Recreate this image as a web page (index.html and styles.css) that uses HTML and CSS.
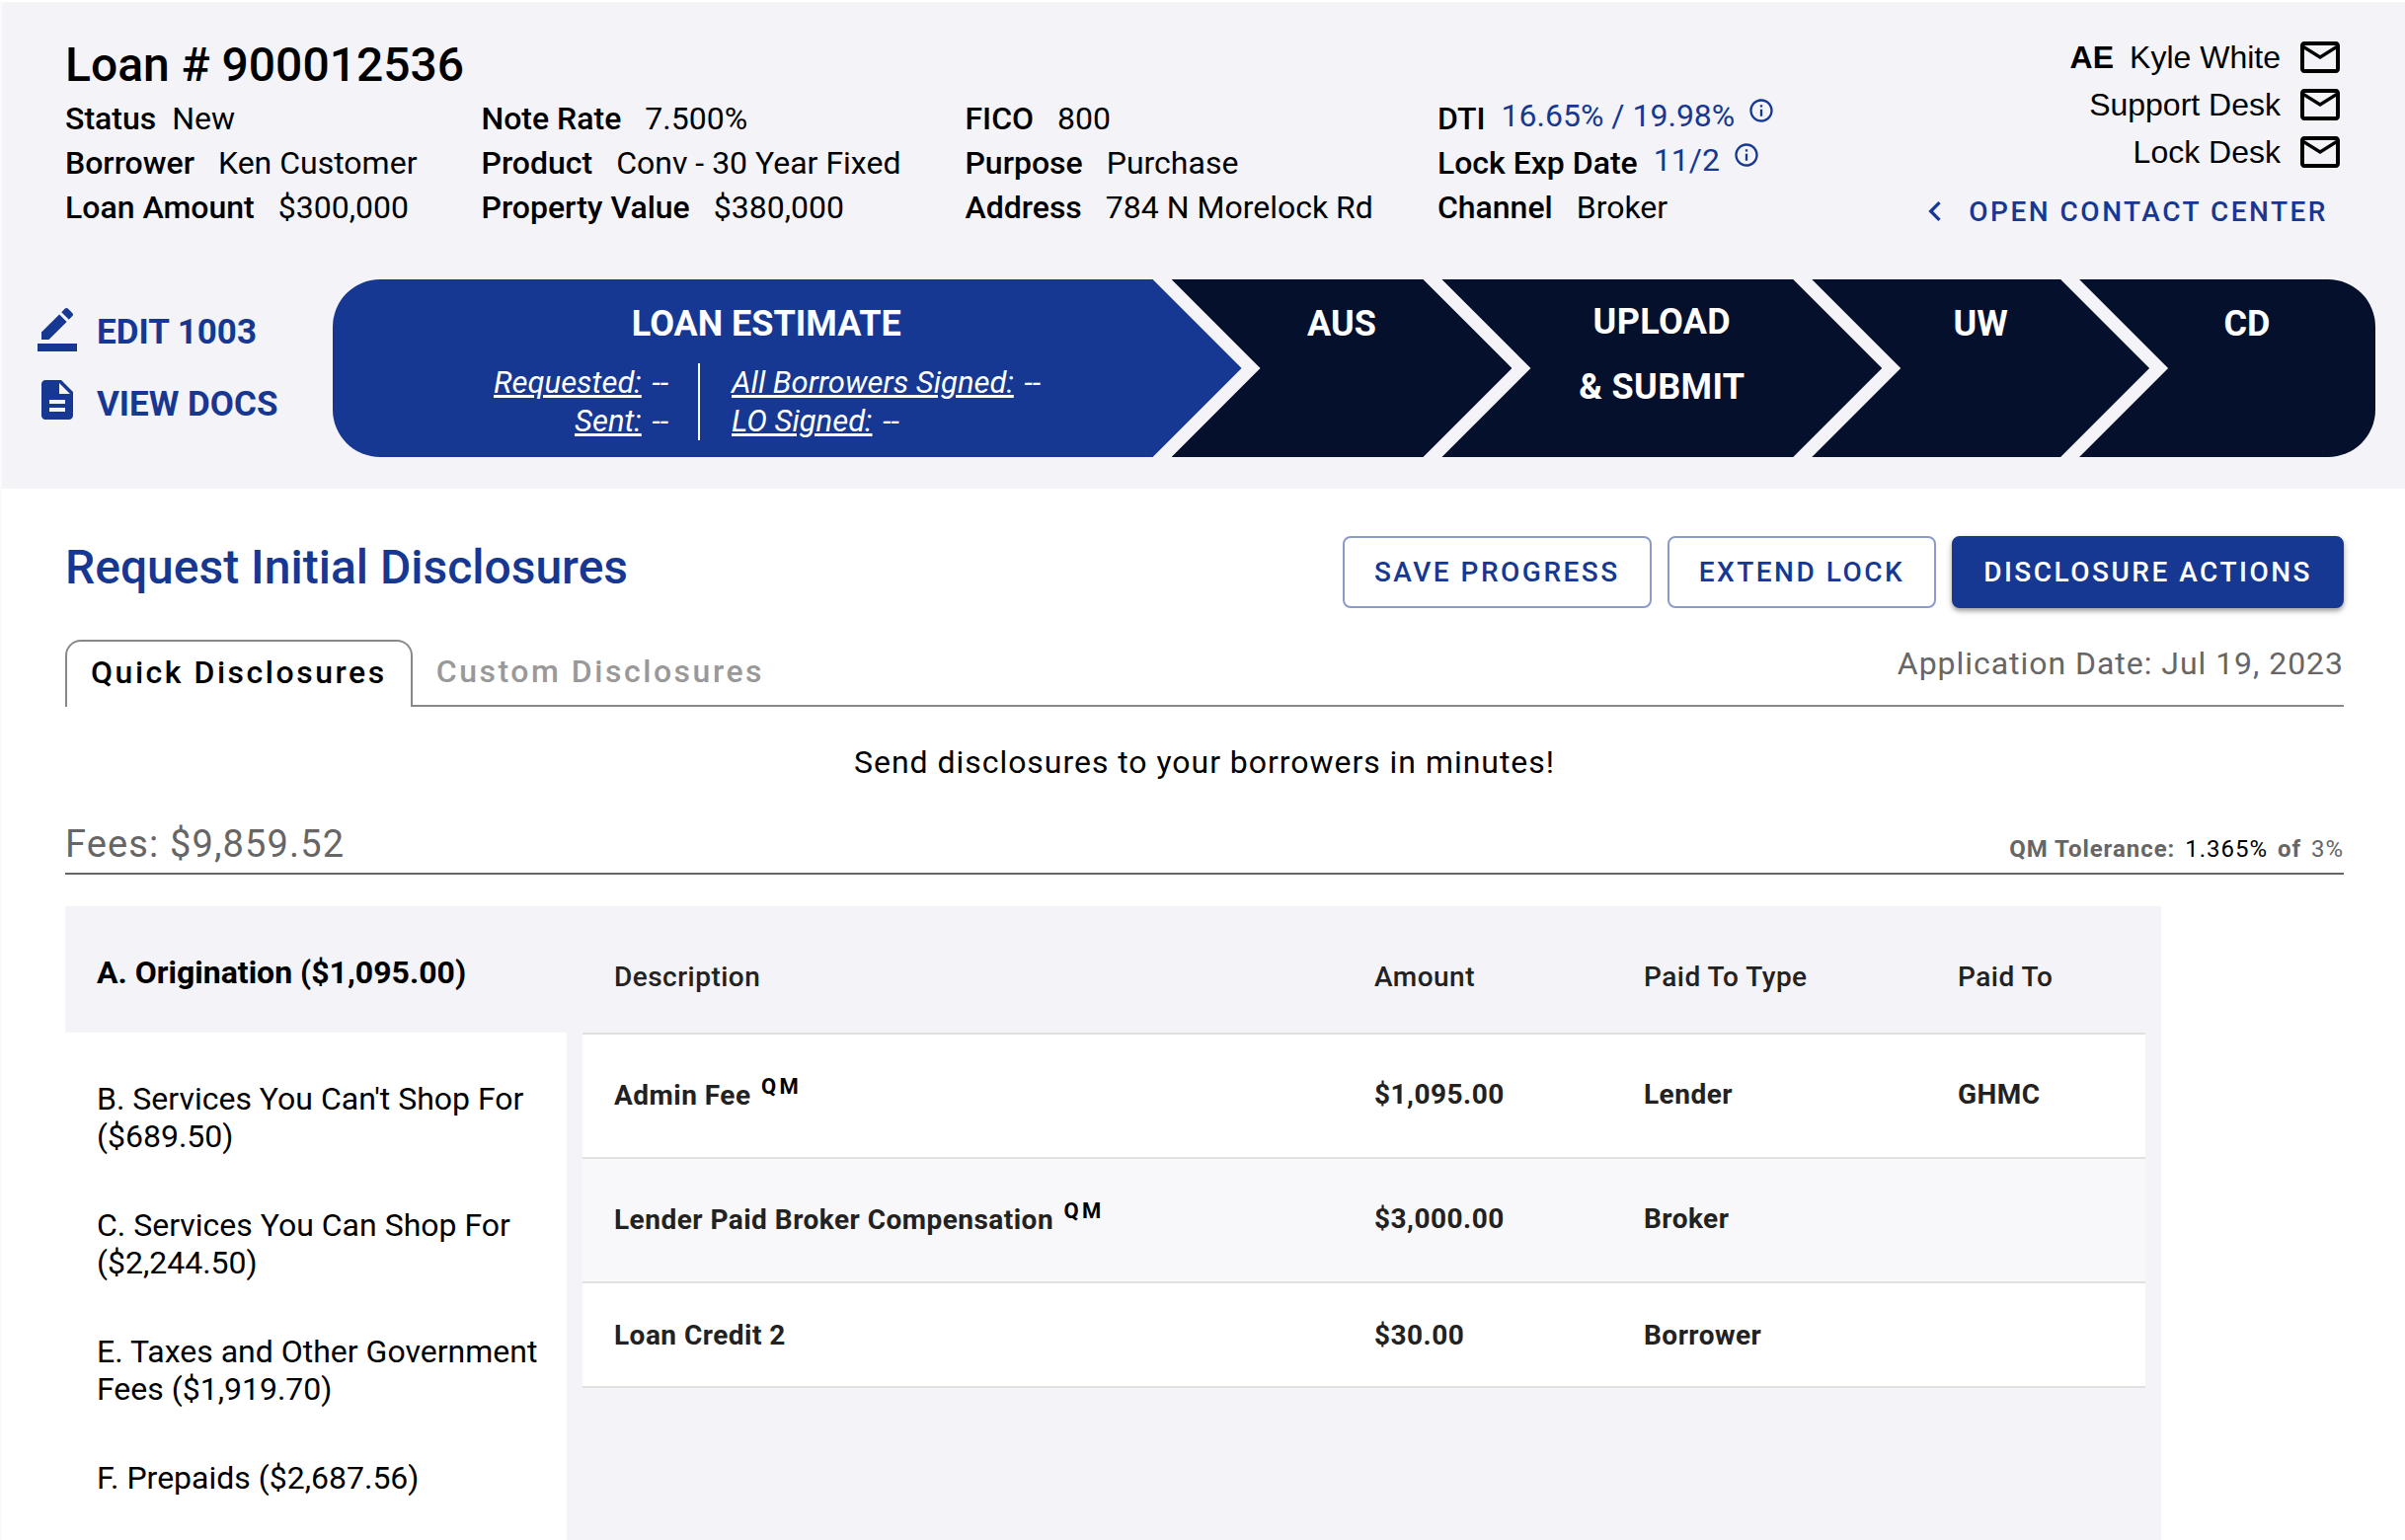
FILE: index.html
```html
<!DOCTYPE html>
<html lang="en">
<head>
  <meta charset="utf-8">
  <title>Loan # 900012536</title>
  <meta name="viewport" content="width=device-width, initial-scale=1">
  <link rel="stylesheet" href="styles.css">
</head>
<body>
  <svg width="0" height="0" class="sprite" aria-hidden="true">
    <symbol id="mail" viewBox="0 0 24 24"><path d="M22 6c0-1.100-.9-2-2-2H4c-1.100 0-2 .9-2 2v12c0 1.100.9 2 2 2h16c1.100 0 2-.9 2-2V6zm-2 0l-8 5-8-5h16zm0 12H4V8l8 5 8-5v10z"/></symbol>
    <symbol id="info" viewBox="0 0 24 24"><path d="M11 7h2v2h-2zm0 4h2v6h-2zm1-9C6.480 2 2 6.480 2 12s4.480 10 10 10 10-4.480 10-10S17.520 2 12 2zm0 18c-4.410 0-8-3.590-8-8s3.590-8 8-8 8 3.590 8 8-3.590 8-8 8z"/></symbol>
    <symbol id="chevron" viewBox="0 0 24 24"><path d="M15.410 7.410L14 6l-6 6 6 6 1.410-1.410L10.830 12z"/></symbol>
    <symbol id="edit" viewBox="0 0 24 24"><path d="M22 24H2v-4h20v4zM13.060 5.190l3.750 3.750L7.750 18H4v-3.750l9.060-9.060zm4.820 2.680l-3.750-3.750 1.830-1.830c.39-.39 1.020-.39 1.410 0l2.340 2.340c.39.39.39 1.020 0 1.410l-1.830 1.830z"/></symbol>
    <symbol id="doc" viewBox="0 0 24 24"><path d="M14 2H6c-1.100 0-1.990.9-1.990 2L4 20c0 1.100.89 2 1.990 2H18c1.100 0 2-.9 2-2V8l-6-6zm2 16H8v-2h8v2zm0-4H8v-2h8v2zm-3-5V3.500L18.500 9H13z"/></symbol>
  </svg>

  <header class="loan-header">
    <div class="loan-top">
      <div class="loan-info">
        <h1 class="loan-number">Loan # 900012536</h1>
        <div class="facts">
          <dl class="fact-list">
            <div class="fact fact-tight"><dt>Status</dt><dd>New</dd></div>
            <div class="fact"><dt>Borrower</dt><dd>Ken Customer</dd></div>
            <div class="fact"><dt>Loan Amount</dt><dd>$300,000</dd></div>
          </dl>
          <dl class="fact-list">
            <div class="fact"><dt>Note Rate</dt><dd>7.500%</dd></div>
            <div class="fact"><dt>Product</dt><dd>Conv - 30 Year Fixed</dd></div>
            <div class="fact"><dt>Property Value</dt><dd>$380,000</dd></div>
          </dl>
          <dl class="fact-list">
            <div class="fact"><dt>FICO</dt><dd>800</dd></div>
            <div class="fact"><dt>Purpose</dt><dd>Purchase</dd></div>
            <div class="fact"><dt>Address</dt><dd>784 N Morelock Rd</dd></div>
          </dl>
          <dl class="fact-list">
            <div class="fact fact-tight"><dt>DTI</dt><dd><a class="fact-link" href="#dti">16.65% / 19.98%<svg class="icon-info"><use href="#info"/></svg></a></dd></div>
            <div class="fact fact-tight"><dt>Lock Exp Date</dt><dd><a class="fact-link" href="#lock">11/2<svg class="icon-info"><use href="#info"/></svg></a></dd></div>
            <div class="fact"><dt>Channel</dt><dd>Broker</dd></div>
          </dl>
        </div>
      </div>
      <div class="contacts">
        <a class="contact" href="#ae"><b>AE</b><span>Kyle White</span><svg class="icon"><use href="#mail"/></svg></a>
        <a class="contact" href="#support"><span>Support Desk</span><svg class="icon"><use href="#mail"/></svg></a>
        <a class="contact" href="#lock-desk"><span>Lock Desk</span><svg class="icon"><use href="#mail"/></svg></a>
        <button class="contact-center" type="button"><svg class="icon-chevron"><use href="#chevron"/></svg>OPEN CONTACT CENTER</button>
      </div>
    </div>

    <div class="loan-progress">
      <nav class="quick-links">
        <a class="quick-link" href="#edit-1003"><svg class="icon"><use href="#edit"/></svg>EDIT 1003</a>
        <a class="quick-link" href="#docs"><svg class="icon"><use href="#doc"/></svg>VIEW DOCS</a>
      </nav>
      <ol class="stages">
        <li class="stage stage-estimate">
          <h2 class="stage-title">LOAN ESTIMATE</h2>
          <div class="estimate">
            <div class="estimate-side estimate-left">
              <p><span class="under">Requested:</span> --</p>
              <p><span class="under">Sent:</span> --</p>
            </div>
            <div class="estimate-side estimate-right">
              <p><span class="under">All Borrowers Signed:</span> --</p>
              <p><span class="under">LO Signed:</span> --</p>
            </div>
          </div>
        </li>
        <li class="stage stage-aus"><h2 class="stage-title">AUS</h2></li>
        <li class="stage stage-upload"><h2 class="stage-title stage-title-tall">UPLOAD<br>&amp; SUBMIT</h2></li>
        <li class="stage stage-uw"><h2 class="stage-title">UW</h2></li>
        <li class="stage stage-cd"><h2 class="stage-title">CD</h2></li>
      </ol>
    </div>
  </header>

  <main class="content">
    <div class="title-row">
      <h2 class="page-title">Request Initial Disclosures</h2>
      <div class="actions">
        <button class="btn" type="button">SAVE PROGRESS</button>
        <button class="btn" type="button">EXTEND LOCK</button>
        <button class="btn btn-primary" type="button">DISCLOSURE ACTIONS</button>
      </div>
    </div>

    <div class="tab-row">
      <button class="tab tab-active" type="button">Quick Disclosures</button>
      <div class="tab-rest">
        <button class="tab" type="button">Custom Disclosures</button>
        <span class="app-date">Application Date: Jul 19, 2023</span>
      </div>
    </div>

    <p class="lead">Send disclosures to your borrowers in minutes!</p>

    <div class="fees-head">
      <h3 class="fees-total">Fees: $9,859.52</h3>
      <p class="tolerance"><b>QM Tolerance:</b> <span class="tolerance-value">1.365%</span> <b>of</b> <span>3%</span></p>
    </div>

    <section class="fees">
      <nav class="sections">
        <a class="section section-active" href="#a">A. Origination ($1,095.00)</a>
        <a class="section" href="#b">B. Services You Can't Shop For ($689.50)</a>
        <a class="section" href="#c">C. Services You Can Shop For ($2,244.50)</a>
        <a class="section" href="#e">E. Taxes and Other Government Fees ($1,919.70)</a>
        <a class="section" href="#f">F. Prepaids ($2,687.56)</a>
      </nav>
      <div class="fee-panel">
        <table class="fee-table">
          <thead>
            <tr><th class="col-desc">Description</th><th class="col-amount">Amount</th><th class="col-type">Paid To Type</th><th>Paid To</th></tr>
          </thead>
          <tbody>
            <tr class="row-qm"><td>Admin Fee <sup class="qm">QM</sup></td><td>$1,095.00</td><td>Lender</td><td>GHMC</td></tr>
            <tr class="row-qm"><td>Lender Paid Broker Compensation <sup class="qm">QM</sup></td><td>$3,000.00</td><td>Broker</td><td></td></tr>
            <tr><td>Loan Credit 2</td><td>$30.00</td><td>Borrower</td><td></td></tr>
          </tbody>
        </table>
      </div>
    </section>
  </main>
</body>
</html>
```

FILE: styles.css
```css
:root {
  --blue: #163893;
  --navy: #05102d;
  --mist: #f3f3f8;
  --grey: #666;
  --line: #888;
  --rule: #e0e0e0;
}

* { box-sizing: border-box; }

body {
  margin: 0;
  border-top: 2px solid #fff;
  border-left: 2px solid #fafafa;
  min-height: 100vh;
  display: flex;
  flex-direction: column;
  background: #fff;
  color: #000;
  font-family: Roboto, sans-serif;
  font-size: 32px;
  overflow-x: hidden;
}

h1, h2, h3, p, dl, dd, ol { margin: 0; padding: 0; }
a { color: inherit; text-decoration: none; }
button { margin: 0; border: 0; background: none; font-family: inherit; cursor: pointer; }
svg { fill: currentColor; flex: none; }
.sprite { position: absolute; }
.icon { width: 48px; height: 48px; }

/* Header */
.loan-header { background: var(--mist); padding: 32px 30px 32px 32px; }
.loan-top { display: flex; justify-content: space-between; padding: 0 32px; }
.loan-number { font-size: 48px; line-height: 64px; font-weight: 500; }
.facts { display: flex; gap: 65px; }
.fact { display: flex; gap: 24px; line-height: 45px; white-space: nowrap; }
.fact-tight { gap: 16px; }
.fact dt { font-weight: 500; }
.fact-link { display: flex; gap: 13px; height: 39px; line-height: 39px; color: var(--blue); }
.icon-info { width: 28px; height: 28px; }

.contacts { display: flex; flex-direction: column; align-items: flex-end; font-family: "Liberation Sans", sans-serif; }
.contact { display: flex; align-items: center; gap: 16px; height: 48px; }
.contact-center {
  display: flex;
  align-items: center;
  gap: 14px;
  height: 72px;
  padding: 0 16px;
  color: var(--blue);
  font: 500 28px Roboto, sans-serif;
  letter-spacing: 0.089em;
}
.icon-chevron { width: 40px; height: 40px; }

/* Progress */
.loan-progress { display: flex; margin-top: 33px; }
.quick-links { flex: 0 0 303px; display: flex; flex-direction: column; padding-top: 25px; gap: 25px; }
.quick-link { display: flex; gap: 16px; height: 48px; color: var(--blue); font-size: 35px; font-weight: 700; line-height: 58px; }
.stages {
  flex: 1;
  display: flex;
  height: 180px;
  list-style: none;
  border-radius: 48px;
  overflow: hidden;
  color: #fff;
  text-align: center;
}
.stage {
  min-width: 0;
  margin-right: -71px;
  padding-top: 25px;
  background: var(--navy);
  clip-path: polygon(0 0, calc(100% - 90px) 0, 100% 50%, calc(100% - 90px) 100%, 0 100%, 90px 50%);
}
.stage-estimate {
  flex: 850 0 71px;
  padding-right: 42px;
  background: var(--blue);
  clip-path: polygon(0 0, calc(100% - 90px) 0, 100% 50%, calc(100% - 90px) 100%, 0 100%);
}
.stage-aus { flex: 274 0 71px; }
.stage-upload { flex: 375 0 71px; padding-top: 10px; }
.stage-uw { flex: 271 0 71px; }
.stage-cd {
  flex: 260 0 40px;
  margin-right: 0;
  padding-left: 40px;
  clip-path: polygon(0 0, 100% 0, 100% 100%, 0 100%, 90px 50%);
}
.stage-title { font-size: 36px; font-weight: 700; line-height: 40px; }
.stage-title-tall { line-height: 66px; letter-spacing: 0.01em; }
.estimate { display: grid; grid-template-columns: 372px 1fr; margin-top: 20px; font-size: 31px; font-style: italic; line-height: 39px; }
.estimate-left { padding-right: 30px; border-right: 2px solid #fff; text-align: right; }
.estimate-right { padding-left: 32px; text-align: left; }
.under { margin-right: 3px; text-decoration: underline; text-decoration-thickness: 3px; }

/* Content */
.content { flex: 1; display: flex; flex-direction: column; padding: 48px 62px 0 64px; }
.title-row, .fees-head { display: flex; justify-content: space-between; }
.page-title { color: var(--blue); font-size: 48px; font-weight: 500; line-height: 64px; }
.actions { display: flex; gap: 16px; }
.btn {
  height: 73px;
  padding: 0 30px;
  border: 2px solid #8b9bc9;
  border-radius: 8px;
  color: var(--blue);
  font-size: 28px;
  font-weight: 500;
  letter-spacing: 0.089em;
}
.btn-primary { border-color: var(--blue); background: var(--blue); color: #fff; box-shadow: 0 3px 4px rgba(0, 0, 0, .3), 0 2px 10px rgba(0, 0, 0, .12); }

.tab-row { display: flex; height: 68px; margin-top: 32px; }
.tab-rest { flex: 1; display: flex; justify-content: space-between; border-bottom: 2px solid var(--line); }
.tab { padding: 0 24px 2px; color: #999; font-size: 32px; font-weight: 500; letter-spacing: 0.079em; }
.tab-active { padding-bottom: 4px; border: 2px solid var(--line); border-bottom: 0; border-radius: 16px 16px 0 0; color: #000; }
.app-date { color: var(--grey); line-height: 48px; letter-spacing: 0.03em; }

.lead { margin-top: 32px; text-align: center; line-height: 48px; letter-spacing: 0.03em; }
.fees-head { margin-top: 35px; border-bottom: 2px solid var(--grey); color: var(--grey); align-items: baseline; line-height: 48px; }
.fees-total { font-size: 38px; font-weight: 400; letter-spacing: 0.03em; }
.tolerance { display: flex; gap: 10px; font-size: 24px; letter-spacing: 0.04em; }
.tolerance-value { color: #000; }

/* Fees */
.fees { flex: 1; display: flex; width: 92%; margin-top: 32px; background: var(--mist); }
.sections { flex: 0 0 508px; background: #fff; }
.section { display: block; height: 128px; padding: 48px 16px 4px 32px; line-height: 38px; }
.section-active { width: calc(100% + 16px); background: var(--mist); font-weight: 700; }
.fee-panel { flex: 1; padding: 0 16px; }
.fee-table { width: 100%; table-layout: fixed; border-collapse: separate; border-spacing: 0; color: #222; font-size: 28px; letter-spacing: 0.017em; }
.fee-table th, .fee-table td { height: 106px; padding: 0 32px; border-bottom: 2px solid var(--rule); text-align: left; }
.fee-table th { height: 130px; padding-top: 14px; font-weight: 500; }
.fee-table td { background: #fff; font-weight: 700; }
.fee-table .row-qm td { height: 126px; padding-bottom: 4px; }
.fee-table tr:nth-child(even) td { background: #f8f8fa; }
.col-desc { width: 770px; }
.col-amount { width: 273px; }
.col-type { width: 318px; }
.qm { margin-left: 3px; color: #000; font-size: 22px; letter-spacing: 0.15em; line-height: 1; vertical-align: 11px; }
```
